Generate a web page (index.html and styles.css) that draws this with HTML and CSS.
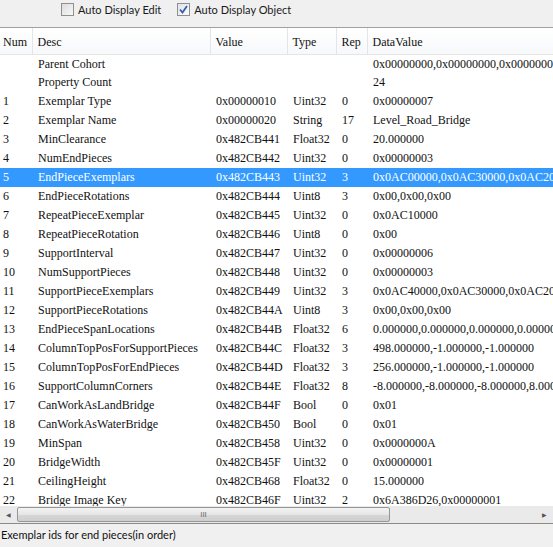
FILE: index.html
```html
<!DOCTYPE html>
<html lang="en">
<head>
    <meta charset="UTF-8">
    <title>Exemplar Properties</title>
    <link rel="stylesheet" href="styles.css">
</head>
<body>
    <div class="window">
        <div class="toolbar">
            <label class="check">
                <span class="box"></span>
                Auto Display Edit
            </label>
            <label class="check">
                <span class="box checked">
                    <svg width="9" height="9" viewBox="0 0 9 9"><path d="M1 4.5 L3.5 7.5 L8 1" fill="none" stroke="#3b5ea8" stroke-width="1.8"/></svg>
                </span>
                Auto Display Object
            </label>
        </div>

        <div class="list">
            <table class="props">
                <colgroup>
                    <col class="c-num">
                    <col class="c-desc">
                    <col class="c-value">
                    <col class="c-type">
                    <col class="c-rep">
                    <col class="c-data">
                </colgroup>
                <thead>
                    <tr>
                        <th>Num</th>
                        <th>Desc</th>
                        <th>Value</th>
                        <th>Type</th>
                        <th>Rep</th>
                        <th>DataValue</th>
                    </tr>
                </thead>
                <tbody id="rows"></tbody>
            </table>
        </div>

        <div class="hscroll">
            <div class="arrow">&#9664;</div>
            <div class="track">
                <div class="thumb"><span class="grip">III</span></div>
            </div>
            <div class="arrow">&#9654;</div>
        </div>

        <div class="status">Exemplar ids for end pieces(in order)</div>
    </div>

    <script>
        const rows = [
            ['', 'Parent Cohort', '', '', '', '0x00000000,0x00000000,0x00000000'],
            ['', 'Property Count', '', '', '', '24'],
            ['1', 'Exemplar Type', '0x00000010', 'Uint32', '0', '0x00000007'],
            ['2', 'Exemplar Name', '0x00000020', 'String', '17', 'Level_Road_Bridge'],
            ['3', 'MinClearance', '0x482CB441', 'Float32', '0', '20.000000'],
            ['4', 'NumEndPieces', '0x482CB442', 'Uint32', '0', '0x00000003'],
            ['5', 'EndPieceExemplars', '0x482CB443', 'Uint32', '3', '0x0AC00000,0x0AC30000,0x0AC20000'],
            ['6', 'EndPieceRotations', '0x482CB444', 'Uint8', '3', '0x00,0x00,0x00'],
            ['7', 'RepeatPieceExemplar', '0x482CB445', 'Uint32', '0', '0x0AC10000'],
            ['8', 'RepeatPieceRotation', '0x482CB446', 'Uint8', '0', '0x00'],
            ['9', 'SupportInterval', '0x482CB447', 'Uint32', '0', '0x00000006'],
            ['10', 'NumSupportPieces', '0x482CB448', 'Uint32', '0', '0x00000003'],
            ['11', 'SupportPieceExemplars', '0x482CB449', 'Uint32', '3', '0x0AC40000,0x0AC30000,0x0AC20000'],
            ['12', 'SupportPieceRotations', '0x482CB44A', 'Uint8', '3', '0x00,0x00,0x00'],
            ['13', 'EndPieceSpanLocations', '0x482CB44B', 'Float32', '6', '0.000000,0.000000,0.000000,0.000000'],
            ['14', 'ColumnTopPosForSupportPieces', '0x482CB44C', 'Float32', '3', '498.000000,-1.000000,-1.000000'],
            ['15', 'ColumnTopPosForEndPieces', '0x482CB44D', 'Float32', '3', '256.000000,-1.000000,-1.000000'],
            ['16', 'SupportColumnCorners', '0x482CB44E', 'Float32', '8', '-8.000000,-8.000000,-8.000000,8.000000'],
            ['17', 'CanWorkAsLandBridge', '0x482CB44F', 'Bool', '0', '0x01'],
            ['18', 'CanWorkAsWaterBridge', '0x482CB450', 'Bool', '0', '0x01'],
            ['19', 'MinSpan', '0x482CB458', 'Uint32', '0', '0x0000000A'],
            ['20', 'BridgeWidth', '0x482CB45F', 'Uint32', '0', '0x00000001'],
            ['21', 'CeilingHeight', '0x482CB468', 'Float32', '0', '15.000000'],
            ['22', 'Bridge Image Key', '0x482CB46F', 'Uint32', '2', '0x6A386D26,0x00000001']
        ];

        const body = document.getElementById('rows');
        rows.forEach(r => {
            const tr = document.createElement('tr');
            if (r[0] === '5') tr.className = 'selected';
            tr.innerHTML = r.map(v => `<td>${v}</td>`).join('');
            body.appendChild(tr);
        });
    </script>
</body>
</html>
```

FILE: styles.css
```css
* {
    margin: 0;
    padding: 0;
    box-sizing: border-box;
}

body {
    background-color: #f0f0f0;
    width: 553px;
    height: 547px;
    overflow: hidden;
}

.window {
    display: flex;
    flex-direction: column;
    height: 547px;
}

.toolbar {
    height: 28px;
    display: flex;
    gap: 16px;
    padding: 3px 0 0 61px;
    background-color: #f0f0f0;
    border-bottom: 1px solid #a0a0a0;
    font-family: 'Lato', sans-serif;
    font-size: 11px;
    color: #1a1a1a;
}

.check {
    display: flex;
    align-items: flex-start;
    gap: 4px;
    height: 16px;
    line-height: 14px;
}

.box {
    width: 13px;
    height: 13px;
    border: 1px solid #8e8f8f;
    background: linear-gradient(135deg, #dcdcdc, #f8f8f8);
    display: flex;
    align-items: center;
    justify-content: center;
}

.box.checked {
    background: linear-gradient(135deg, #e0e3e8, #fbfbfb);
}

.list {
    flex: 1;
    overflow: hidden;
    background-color: #fff;
}

.props {
    table-layout: fixed;
    border-collapse: collapse;
    width: 640px;
    font-family: 'Liberation Serif', serif;
    font-size: 12px;
    color: #111;
}

.c-num { width: 32px; }
.c-desc { width: 178px; }
.c-value { width: 77px; }
.c-type { width: 49px; }
.c-rep { width: 31px; }
.c-data { width: 273px; }

.props th {
    height: 26px;
    font-weight: normal;
    text-align: left;
    padding: 3px 5px 0;
    border-right: 1px solid #e3e5e8;
    border-bottom: 1px solid #e6e6e6;
    background: linear-gradient(#ffffff, #f7f8fa);
    white-space: nowrap;
}

.props th:first-child {
    padding-left: 3px;
}

.props td {
    height: 19px;
    padding: 0 6px;
    white-space: nowrap;
    overflow: hidden;
}

.props td:first-child {
    padding-left: 3px;
}

.props tbody tr:first-child td {
    padding-top: 1px;
}

.props tr.selected td {
    background-color: #3399ff;
    color: #fff;
}

.hscroll {
    height: 18px;
    display: flex;
    background-color: #eaeaea;
    border-bottom: 1px solid #8a8a8a;
}

.arrow {
    width: 17px;
    display: flex;
    align-items: center;
    justify-content: center;
    font-size: 6px;
    color: #555;
}

.track {
    flex: 1;
    padding: 1px 0;
}

.thumb {
    width: 373px;
    height: 15px;
    border: 1px solid #979797;
    border-radius: 2px;
    background: linear-gradient(#f3f3f3, #e6e6e6 50%, #d6d6d6 51%, #cfcfcf);
    display: flex;
    align-items: center;
    justify-content: center;
}

.grip {
    font-family: 'Liberation Sans', sans-serif;
    font-size: 8px;
    color: #6a6a6a;
}

.status {
    height: 23px;
    padding: 4px 0 0 1px;
    font-family: 'Lato', sans-serif;
    font-size: 11px;
    color: #111;
    background-color: #f0f0f0;
}
```
